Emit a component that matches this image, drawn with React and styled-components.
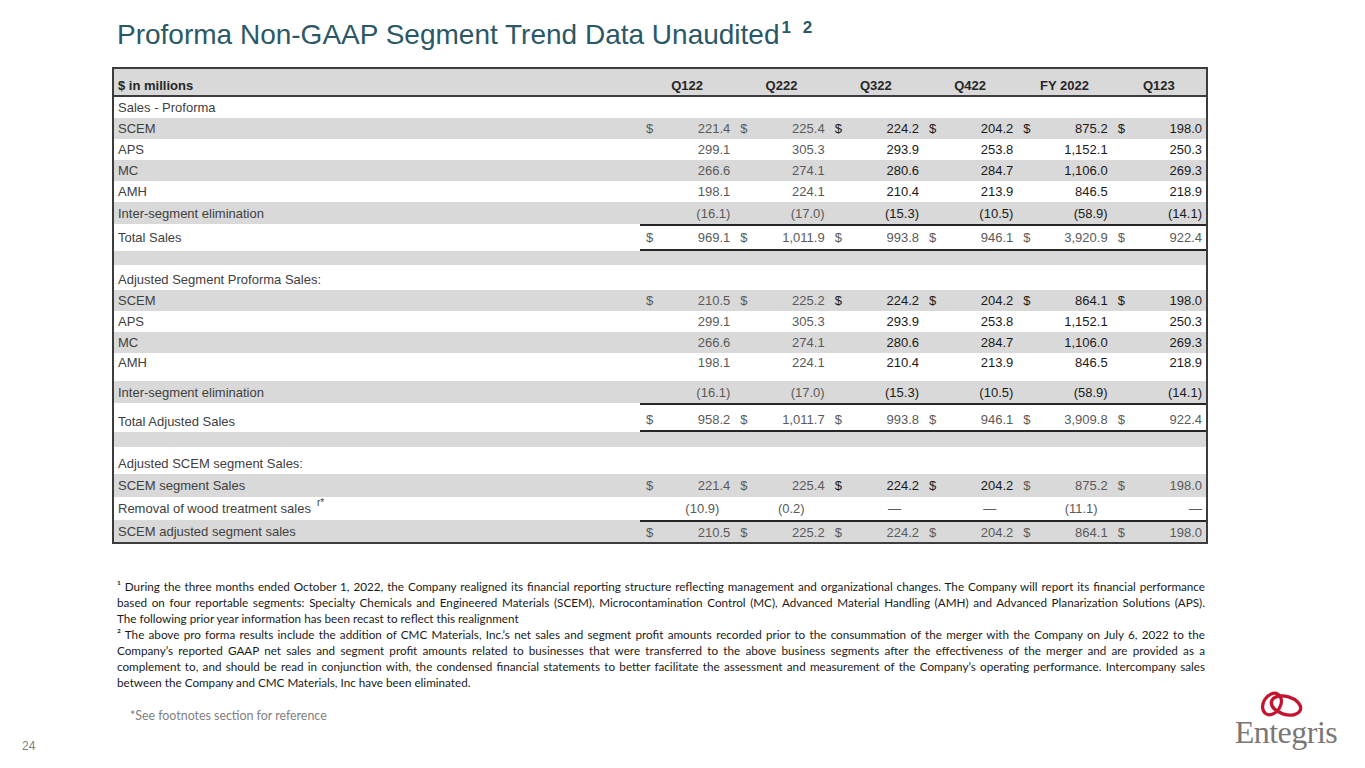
import React from 'react';
import styled, { createGlobalStyle } from 'styled-components';

const GlobalStyle = createGlobalStyle`
  html, body {
    margin: 0;
    padding: 0;
    background: #ffffff;
  }
  body {
    font-family: 'Liberation Sans', Arial, sans-serif;
  }
`;

const Slide = styled.div`
  width: 1365px;
  height: 768px;
  display: flex;
  flex-direction: column;
  overflow: hidden;
  background: #fff;
`;

const Title = styled.h1`
  margin: 19px 0 0 117px;
  font: 400 28px/32px 'Liberation Sans', Arial, sans-serif;
  color: #2b5866;
  white-space: nowrap;
`;

const TitleNote = styled.sup`
  font-size: 17px;
  font-weight: 700;
  line-height: 0;
  vertical-align: 11px;
  margin-left: 2px;
  word-spacing: 7px;
`;

const Table = styled.div`
  margin: 16px 0 0 112px;
  width: 1096px;
  box-sizing: border-box;
  border: 2px solid #3c3c3c;
  font-size: 13px;
  color: #404040;
`;

const Row = styled.div`
  display: grid;
  grid-template-columns: 526px repeat(6, 1fr);
  height: ${({ $h }) => $h || 21}px;
  background: ${({ $shade }) => ($shade ? '#d9d9d9' : '#ffffff')};
`;

const HeadRow = styled(Row)`
  height: 26px;
  border-bottom: 2px solid #3c3c3c;
  font-weight: 700;
  color: #262626;
`;

const HeadCell = styled.div`
  display: flex;
  align-items: flex-end;
  justify-content: ${({ $left }) => ($left ? 'flex-start' : 'center')};
  padding: 0 4px 2px;
  white-space: nowrap;
`;

const alignMap = { top: 'flex-start', bottom: 'flex-end', center: 'center' };

const Label = styled.div`
  display: flex;
  align-items: ${({ $v }) => alignMap[$v || 'center']};
  padding: ${({ $v }) => ($v === 'top' ? '2px' : '0')} 4px ${({ $v }) => ($v === 'bottom' ? '3px' : '0')};
  white-space: nowrap;
`;

const Marker = styled.span`
  position: relative;
  top: -6px;
  font-size: 10px;
  margin-left: 6px;
`;

const Amount = styled.div`
  display: flex;
  align-items: ${({ $v }) => alignMap[$v || 'center']};
  justify-content: ${({ $dollar }) => ($dollar ? 'space-between' : 'flex-end')};
  padding: ${({ $v }) => ($v === 'top' ? '2px' : '0')} ${({ $inset }) => 4 + ($inset || 0)}px ${({ $v }) => ($v === 'bottom' ? '3px' : '0')} 6px;
  color: ${({ $dark }) => ($dark ? '#1a1a1a' : '#5a5a5a')};
  border-top: ${({ $top }) => ($top ? '2px solid #262626' : 'none')};
  border-bottom: ${({ $under }) => ($under ? '2px solid #262626' : 'none')};
  white-space: nowrap;
`;

const Footnotes = styled.div`
  margin: 34px 0 0 117px;
  width: 1088px;
  font: 400 11.7px/16px Lato, 'Open Sans', sans-serif;
  color: #1a1a1a;
`;

const FootLine = styled.div`
  white-space: nowrap;
  text-align: ${({ $justify }) => ($justify ? 'justify' : 'left')};
  text-align-last: ${({ $justify }) => ($justify ? 'justify' : 'left')};
  ${({ $justify }) => ($justify ? 'white-space: normal;' : '')}
`;

const Footer = styled.div`
  flex: 1;
  display: flex;
  justify-content: space-between;
  align-items: flex-end;
  padding: 0 25px 16px 22px;
`;

const FooterLeft = styled.div`
  display: flex;
  flex-direction: column;
`;

const Note = styled.div`
  margin-left: 108px;
  font: 400 12.4px/16px Lato, 'Open Sans', sans-serif;
  color: #7f7f7f;
`;

const PageNum = styled.div`
  margin-top: 14px;
  font: 400 12px/16px 'Liberation Sans', Arial, sans-serif;
  color: #7f7f7f;
`;

const Logo = styled.div`
  display: flex;
  flex-direction: column;
  align-items: center;
  width: 108px;
  margin-bottom: 7px;
`;

const LogoText = styled.div`
  font: 400 32px/30px 'Liberation Serif', 'Times New Roman', serif;
  color: #7a7674;
  letter-spacing: -0.5px;
  margin-top: -1px;
`;

function Rings() {
  return (
    <svg width="48" height="28" viewBox="0 0 48 28" style={{ marginLeft: -8 }}>
      <ellipse cx="14" cy="14" rx="8.5" ry="11.5" transform="rotate(32 14 14)" fill="none" stroke="#c4122f" strokeWidth="3.2" />
      <ellipse cx="28" cy="15.5" rx="15" ry="9" transform="rotate(16 28 15.5)" fill="none" stroke="#c4122f" strokeWidth="3.4" />
    </svg>
  );
}

const headers = ['Q122', 'Q222', 'Q322', 'Q422', 'FY 2022', 'Q123'];

const rows = [
  { label: 'Sales - Proforma' },
  { label: 'SCEM', shade: true, dollar: true, values: ['221.4', '225.4', '224.2', '204.2', '875.2', '198.0'], dark: [2, 3, 4, 5] },
  { label: 'APS', values: ['299.1', '305.3', '293.9', '253.8', '1,152.1', '250.3'], dark: [2, 3, 4, 5] },
  { label: 'MC', shade: true, values: ['266.6', '274.1', '280.6', '284.7', '1,106.0', '269.3'], dark: [2, 3, 4, 5] },
  { label: 'AMH', values: ['198.1', '224.1', '210.4', '213.9', '846.5', '218.9'], dark: [2, 3, 4, 5] },
  { label: 'Inter-segment elimination', shade: true, h: 22, values: ['(16.1)', '(17.0)', '(15.3)', '(10.5)', '(58.9)', '(14.1)'], dark: [2, 3, 4, 5] },
  { label: 'Total Sales', h: 27, dollar: true, top: true, under: true, values: ['969.1', '1,011.9', '993.8', '946.1', '3,920.9', '922.4'] },
  { shade: true, h: 14 },
  { label: 'Adjusted Segment Proforma Sales:', h: 25, v: 'bottom' },
  { label: 'SCEM', shade: true, dollar: true, values: ['210.5', '225.2', '224.2', '204.2', '864.1', '198.0'], dark: [2, 3, 4, 5] },
  { label: 'APS', values: ['299.1', '305.3', '293.9', '253.8', '1,152.1', '250.3'], dark: [2, 3, 4, 5] },
  { label: 'MC', shade: true, values: ['266.6', '274.1', '280.6', '284.7', '1,106.0', '269.3'], dark: [2, 3, 4, 5] },
  { label: 'AMH', h: 28, v: 'top', values: ['198.1', '224.1', '210.4', '213.9', '846.5', '218.9'], dark: [2, 3, 4, 5] },
  { label: 'Inter-segment elimination', shade: true, h: 22, values: ['(16.1)', '(17.0)', '(15.3)', '(10.5)', '(58.9)', '(14.1)'], dark: [2, 3, 4, 5] },
  { label: 'Total Adjusted Sales', h: 29, v: 'bottom', dollar: true, top: true, under: true, values: ['958.2', '1,011.7', '993.8', '946.1', '3,909.8', '922.4'] },
  { shade: true, h: 15 },
  { label: 'Adjusted SCEM segment Sales:', h: 27, v: 'bottom' },
  { label: 'SCEM segment Sales', shade: true, h: 23, dollar: true, values: ['221.4', '225.4', '224.2', '204.2', '875.2', '198.0'], dark: [2, 3] },
  { label: 'Removal of wood treatment sales', marker: 'r*', h: 23, values: ['(10.9)', '(0.2)', '—', '—', '(11.1)', '—'], inset: [11, 20, 18, 17, 10, 0] },
  { label: 'SCEM adjusted segment sales', shade: true, h: 22, dollar: true, top: true, values: ['210.5', '225.2', '224.2', '204.2', '864.1', '198.0'] },
];

const footLines = [
  { text: '¹ During the three months ended October 1, 2022, the Company realigned its financial reporting structure reflecting management and organizational changes.  The Company will report its financial performance', justify: true },
  { text: 'based on four reportable segments: Specialty Chemicals and Engineered Materials (SCEM), Microcontamination Control (MC), Advanced Material Handling (AMH) and Advanced Planarization Solutions (APS).', justify: true },
  { text: 'The following prior year information has been recast to reflect this realignment' },
  { text: '² The above pro forma results include the addition of CMC Materials, Inc.’s net sales and segment profit amounts recorded prior to the consummation of the merger with the Company on July 6, 2022 to the', justify: true },
  { text: 'Company’s reported GAAP net sales and segment profit amounts related to businesses that were transferred to the above business segments after the effectiveness of the merger and are provided as a', justify: true },
  { text: 'complement to, and should be read in conjunction with, the condensed financial statements to better facilitate the assessment and measurement of the Company’s operating performance. Intercompany sales', justify: true },
  { text: 'between the Company and CMC Materials, Inc have been eliminated.' },
];

function TableRow({ row }) {
  return (
    <Row $shade={row.shade} $h={row.h}>
      <Label $v={row.v}>
        {row.label}
        {row.marker && <Marker>{row.marker}</Marker>}
      </Label>
      {headers.map((h, i) => {
        const v = row.values ? row.values[i] : null;
        return (
          <Amount
            key={h}
            $v={row.v}
            $dollar={row.dollar}
            $dark={row.dark && row.dark.includes(i)}
            $top={row.top}
            $under={row.under}
            $inset={row.inset ? row.inset[i] : 0}
          >
            {row.dollar && <span>$</span>}
            {v && <span>{v}</span>}
          </Amount>
        );
      })}
    </Row>
  );
}

export default function App() {
  return (
    <Slide>
      <GlobalStyle />
      <Title>
        Proforma Non-GAAP Segment Trend Data Unaudited<TitleNote>1 2</TitleNote>
      </Title>

      <Table>
        <HeadRow $shade>
          <HeadCell $left>$ in millions</HeadCell>
          {headers.map((h) => (
            <HeadCell key={h}>{h}</HeadCell>
          ))}
        </HeadRow>
        {rows.map((row, i) => (
          <TableRow key={i} row={row} />
        ))}
      </Table>

      <Footnotes>
        {footLines.map((l, i) => (
          <FootLine key={i} $justify={l.justify}>{l.text}</FootLine>
        ))}
      </Footnotes>

      <Footer>
        <FooterLeft>
          <Note>*See footnotes section for reference</Note>
          <PageNum>24</PageNum>
        </FooterLeft>
        <Logo>
          <Rings />
          <LogoText>Entegris</LogoText>
        </Logo>
      </Footer>
    </Slide>
  );
}
